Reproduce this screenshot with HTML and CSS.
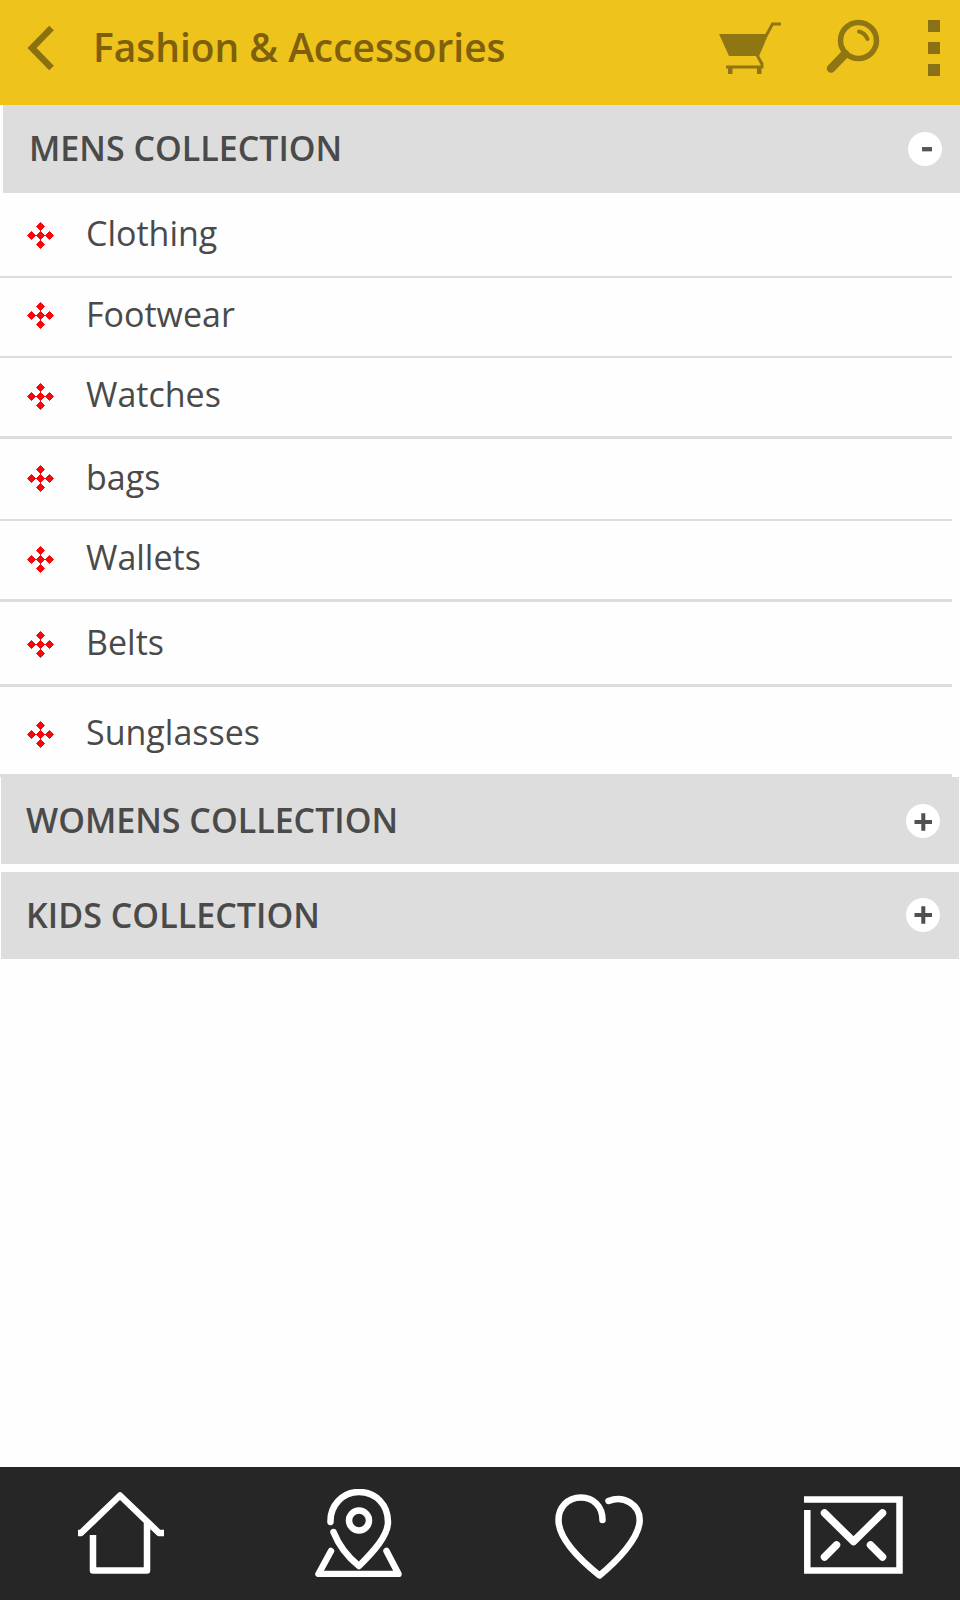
FILE: index.html
```html
<!DOCTYPE html>
<html lang="en">
<head>
  <meta charset="UTF-8">
  <meta name="viewport" content="width=device-width, initial-scale=1.0">
  <link rel="stylesheet" href="styles.css">
  <title>Fashion &amp; Accessories</title>
</head>
<body>
  <!-- shared bullet shape -->
  <svg class="defs">
    <symbol id="bullet" viewBox="0 0 27 27">
      <path d="M13.5 4v19M4 13.5h19" stroke="#f5070b" stroke-width="1"/>
      <path fill="#f5070b" stroke="#f5070b" stroke-width="1" stroke-linejoin="round" d="M13.500 .5l4 4-4 4-4-4zM13.500 9.500l4 4-4 4-4-4zM13.500 18.500l4 4-4 4-4-4zM4.500 9.500l4 4-4 4-4-4zM22.500 9.500l4 4-4 4-4-4z"/>
    </symbol>
  </svg>

  <header class="topbar">
    <a href="#" class="back">
      <svg width="27" height="48" viewBox="0 0 27 48"><path d="M24.500 4L5 24l19.500 20" fill="none" stroke="#8a7110" stroke-width="6.500"/></svg>
    </a>
    <h1 class="title">Fashion &amp; Accessories</h1>
    <a href="#" class="cart">
      <svg width="64" height="52" viewBox="0 0 64 52">
        <path d="M0 12h48L39.500 34H10z" fill="#8f7613"/>
        <path d="M62 2h-8.500L47 14l-8.500 20 4.500 8v3H7" fill="none" stroke="#8f7613" stroke-width="3"/>
        <path d="M9 45h4.500v7H9zM38 45h4.500v7H38z" fill="#8f7613"/>
      </svg>
    </a>
    <a href="#" class="search">
      <svg width="54" height="55" viewBox="0 0 54 55" fill="none" stroke="#8f7613" stroke-linecap="round">
        <circle cx="32.500" cy="21.500" r="18" stroke-width="5.500"/>
        <path d="M33 12.500q6 1.500 8.500 7.500" stroke-width="4"/>
        <path d="M19 35L5 49.500" stroke-width="8.500"/>
      </svg>
    </a>
    <a href="#" class="more"><span></span><span></span><span></span></a>
  </header>

  <main>
    <section>
      <h2 class="group mens"><span>MENS COLLECTION</span>
        <svg class="toggle" width="34" height="34" viewBox="0 0 34 34"><circle cx="17" cy="17" r="17" fill="#fff"/><path d="M14 17.200h10" stroke="#555" stroke-width="4.300"/></svg>
      </h2>
      <ul class="list">
        <li class="clothing"><svg class="bullet"><use href="#bullet"/></svg><span>Clothing</span></li>
        <li class="footwear"><svg class="bullet"><use href="#bullet"/></svg><span>Footwear</span></li>
        <li class="watches"><svg class="bullet"><use href="#bullet"/></svg><span>Watches</span></li>
        <li class="bags"><svg class="bullet"><use href="#bullet"/></svg><span>bags</span></li>
        <li class="wallets"><svg class="bullet"><use href="#bullet"/></svg><span>Wallets</span></li>
        <li class="belts"><svg class="bullet"><use href="#bullet"/></svg><span>Belts</span></li>
        <li class="sunglasses"><svg class="bullet"><use href="#bullet"/></svg><span>Sunglasses</span></li>
      </ul>
    </section>
    <h2 class="group womens"><span>WOMENS COLLECTION</span>
      <svg class="toggle" width="34" height="34" viewBox="0 0 34 34"><circle cx="17" cy="17" r="17" fill="#fff"/><path d="M8.500 18h17.500M17.300 9.200v17.500" stroke="#505050" stroke-width="4"/></svg>
    </h2>
    <h2 class="group kids"><span>KIDS COLLECTION</span>
      <svg class="toggle" width="34" height="34" viewBox="0 0 34 34"><circle cx="17" cy="17" r="17" fill="#fff"/><path d="M8.500 17h17.500M17.300 8.200v17.500" stroke="#505050" stroke-width="4"/></svg>
    </h2>
  </main>

  <footer class="tabbar">
    <a href="#" class="home">
      <svg width="86" height="82" viewBox="0 0 86 82"><path d="M0 41h3L42 3.500 81 41h5M69 30v48.500H15V43" fill="none" stroke="#fff" stroke-width="6.500" stroke-linejoin="round"/></svg>
    </a>
    <a href="#" class="places">
      <svg width="87" height="88" viewBox="0 0 87 88" fill="none" stroke="#fff" stroke-width="6.500" stroke-linecap="round" stroke-linejoin="round">
        <path d="M15.500 33C15 17 27 3 44 3s29 13 29 30c0 14-15 30-29 44C34 69 24 57 18.500 43"/>
        <circle cx="44" cy="31.500" r="10"/>
        <path d="M16 62L3.500 85h80L71.500 62"/>
      </svg>
    </a>
    <a href="#" class="likes">
      <svg width="88" height="85" viewBox="0 0 88 85" fill="none" stroke="#fff" stroke-width="6.500" stroke-linecap="round" stroke-linejoin="round">
        <path d="M47.500 26C47.500 12 38 3.500 26 3.500 12 3.500 3.500 14 3.500 26c0 20 23 41 41 55.500 17-14 40.200-37.500 40.200-55.500C84.700 11 69 .5 53.500 7"/>
      </svg>
    </a>
    <a href="#" class="mail">
      <svg width="99" height="78" viewBox="0 0 99 78" fill="none" stroke="#fff" stroke-width="6.500">
        <path d="M0 3.500h95.500v71H3.300V14"/>
        <path stroke-width="7.500" stroke-linecap="round" stroke-linejoin="round" d="M20.500 17L49.500 45.500 78.500 17M32.500 49L20.500 61M66.500 49l12 12"/>
      </svg>
    </a>
  </footer>
</body>
</html>
```

FILE: styles.css
```css
*{
  margin: 0;
  padding: 0;
  box-sizing: border-box;
}
body{
  width: 960px;
  height: 1600px;
  display: flex;
  flex-direction: column;
  background-color: #fefefe;
  font-family: 'Open Sans', sans-serif;
  color: #4a4a4a;
}
svg{
  display: block;
  flex: none;
}
.defs{
  display: none;
}

/* top bar */
.topbar{
  height: 105px;
  display: flex;
  align-items: flex-start;
  background-color: #edc31c;
}
.back{
  margin: 24px 0 0 27px;
}
.title{
  width: 624px;
  padding: 21px 0 0 39px;
  font-size: 38.9px;
  line-height: 52px;
  font-weight: 600;
  white-space: nowrap;
  color: #7d5f0c;
}
.cart{
  margin: 22px 0 0 41px;
}
.search{
  margin: 19px 0 0 43px;
}
.more{
  display: flex;
  flex-direction: column;
  gap: 10px;
  margin: 20px 0 0 48px;
}
.more span{
  width: 12px;
  height: 12px;
  background-color: #8b7115;
}

/* collections */
main{
  flex: 1;
}
.group{
  display: flex;
  justify-content: space-between;
  align-items: center;
  height: 87px;
  margin: 0 1px;
  padding: 0 19px 0 25px;
  background-color: #ddd;
  font-size: 34px;
  line-height: 40px;
  font-weight: 600;
  white-space: nowrap;
}
.group span{
  padding-bottom: 2px;
}
.mens{
  height: 88px;
  margin: 0 0 0 3px;
  padding: 0 18px 0 26px;
}
.womens .toggle{
  margin-top: 1px;
}
.kids{
  margin-top: 8px;
}
.kids span{
  letter-spacing: 0.05px;
}
.kids .toggle{
  margin-bottom: 1px;
}
.list{
  width: 952px;
  list-style: none;
}
.list li{
  display: flex;
  align-items: flex-start;
  height: 80px;
  padding: 16px 0 0 27px;
  border-bottom: 2px solid #ddd;
  font-size: 34px;
  line-height: 40px;
}
.list .bullet{
  width: 27px;
  height: 27px;
  margin: 9px 32px 0 0;
}
.list .clothing{
  height: 85px;
  padding-top: 20px;
}
.list .footwear .bullet, .list .bags .bullet{
  margin-top: 8px;
}
.list .watches{
  height: 81px;
  border-bottom-width: 3px;
}
.list .bags{
  height: 82px;
  padding-top: 18px;
}
.list .wallets{
  height: 81px;
  border-bottom-width: 3px;
}
.list .belts{
  height: 85px;
  padding-top: 20px;
  border-bottom-width: 3px;
}
.list .sunglasses{
  height: 90px;
  padding-top: 25px;
  border-bottom-width: 3px;
}

/* bottom tabs */
.tabbar{
  height: 133px;
  display: flex;
  align-items: flex-start;
  background-color: #262626;
}
.home{
  margin: 25px 0 0 78px;
}
.places{
  margin: 22px 0 0 151px;
}
.likes{
  margin: 27px 0 0 153px;
}
.mail{
  margin: 29px 0 0 161px;
}
```
